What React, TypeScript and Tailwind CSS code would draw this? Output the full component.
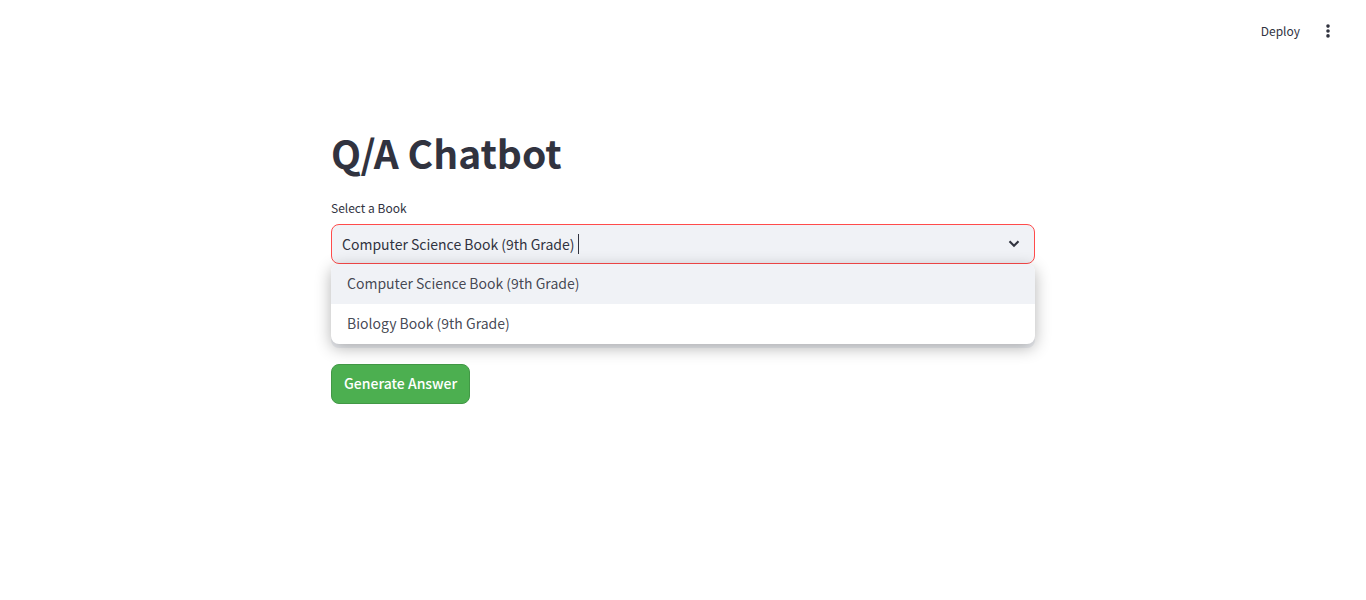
import { useState } from "react";

const books = ["Computer Science Book (9th Grade)", "Biology Book (9th Grade)"];

function Header() {
  return (
    <header className="flex h-15 items-center justify-end gap-3 pt-0.5 pr-7">
      <button type="button" className="px-1.5 text-[12px] leading-5">
        Deploy
      </button>
      <button type="button" aria-label="Main menu" className="flex size-5 items-center justify-center">
        <svg viewBox="0 0 20 20" className="size-5" fill="currentColor" aria-hidden="true">
          <circle cx="10" cy="5.1" r="1.8" />
          <circle cx="10" cy="10" r="1.8" />
          <circle cx="10" cy="14.9" r="1.8" />
        </svg>
      </button>
    </header>
  );
}

function BookSelect() {
  const [book, setBook] = useState(books[0]);
  return (
    <div className="relative">
      <label htmlFor="book" className="mb-1 block text-[12px] leading-6">
        Select a Book
      </label>
      <div className="flex h-10 items-center rounded-lg border border-[#ff4b4b] bg-[#f0f2f6] pr-2.5 pl-2.5">
        <input
          id="book"
          role="combobox"
          aria-expanded="true"
          aria-controls="book-options"
          value={book}
          readOnly
          className="field-sizing-content bg-transparent text-[14px] leading-6 outline-none"
        />
        <span className="ml-1 h-5 w-px bg-[#31333f]" aria-hidden="true" />
        <svg viewBox="0 0 8 8" className="mr-1 ml-auto size-3" fill="currentColor" aria-hidden="true">
          <path d="M1.5 1.6 0.5 2.6 4 6.1 7.5 2.6 6.5 1.6 4 4.1z" />
        </svg>
      </div>
      <ul
        id="book-options"
        role="listbox"
        aria-label="Books"
        className="absolute inset-x-0 top-full z-10 overflow-hidden rounded-lg bg-white text-[14px] leading-6 text-[#31333f]/90 shadow-[0_4px_16px_rgba(0,0,0,0.3)]"
      >
        {books.map((name) => (
          <li
            key={name}
            role="option"
            aria-selected={name === book}
            onClick={() => setBook(name)}
            className="flex h-10 cursor-pointer items-center px-4 pb-0.5 aria-selected:bg-[#f0f2f6]"
          >
            {name}
          </li>
        ))}
      </ul>
    </div>
  );
}

export default function App() {
  return (
    <div className="min-h-screen bg-white font-['Noto_Sans_CJK_SC',sans-serif] text-[#31333f]">
      <Header />
      <main className="mx-auto max-w-184 px-4 pt-16">
        <h1 className="pb-4 text-[39px] leading-14 font-bold">Q/A Chatbot</h1>
        <form className="flex flex-col items-start gap-4" onSubmit={(event) => event.preventDefault()}>
          <div className="w-full">
            <BookSelect />
          </div>
          <div className="w-full pt-7">
            <input
              aria-label="Question"
              className="block h-10 w-full rounded-lg bg-[#f0f2f6] px-3 text-[14px] outline-none"
            />
          </div>
          <button
            type="submit"
            className="h-10 rounded-lg border border-[#429846] bg-[#4caf50] px-3 pb-0.5 text-[14px] leading-6 font-medium text-white"
          >
            Generate Answer
          </button>
        </form>
      </main>
    </div>
  );
}
